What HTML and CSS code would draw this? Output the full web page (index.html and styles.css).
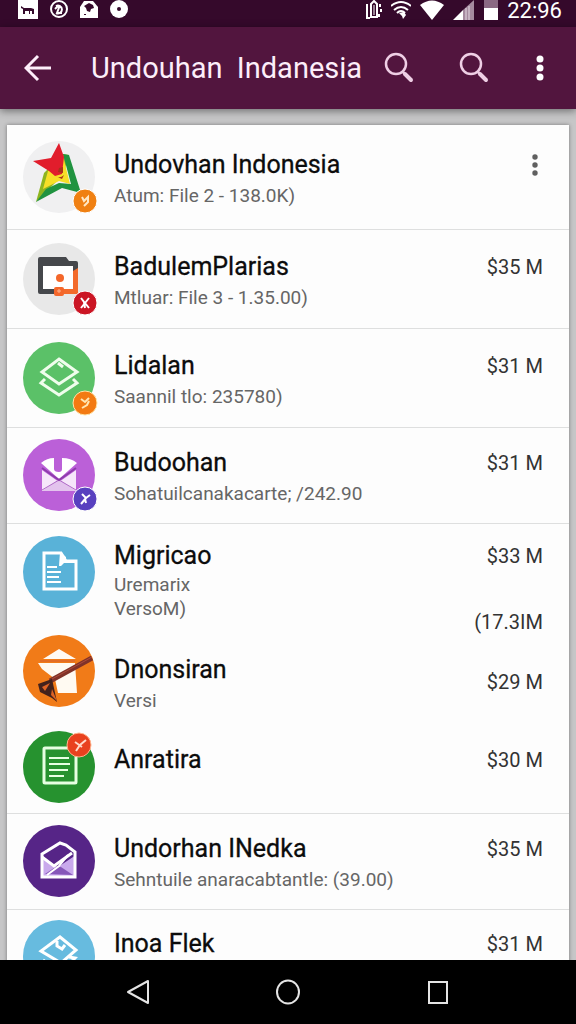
FILE: index.html
```html
<!DOCTYPE html>
<html lang="id">
<head>
  <meta charset="UTF-8">
  <meta name="viewport" content="width=device-width, initial-scale=1.0">
  <title>Undouhan Indanesia</title>
  <link rel="stylesheet" href="styles.css">
</head>
<body>
  <!-- Status bar -->
  <div class="status-bar">
    <div class="status-left">
      <svg width="20" height="20" viewBox="0 0 20 20"><path fill="#fff" d="M0 0h20v19H0z"/><path fill="#35092b" d="M3 6l3 2h7l3 1v5h-2v-3h-2v3h-1v-3H7v3H5V9L3 8z"/></svg>
      <svg width="18" height="20" viewBox="0 0 18 20"><g fill="none" stroke="#fff"><circle cx="9" cy="9" r="8" stroke-width="2"/><path stroke-width="2" d="M6 6a4 4 0 1 1 0 7M10 5l-3 8h5M5 9l3-3"/></g></svg>
      <svg width="18" height="20" viewBox="0 0 18 20"><path fill="#fff" d="M0 18V7l4-6h9l5 6v11z"/><path fill="#35092b" d="M4 6l5-3 4 2 1 3-3 1-1 3-3-1-1-3zM4 14h2v1H4z"/></svg>
      <svg width="18" height="20" viewBox="0 0 18 20"><circle cx="9" cy="9" r="9" fill="#fff"/><circle cx="9" cy="9" r="2" fill="#35092b"/></svg>
    </div>
    <div class="status-right">
      <svg width="16" height="20" viewBox="0 0 16 20"><g fill="none" stroke="#fff"><path stroke-width="2" d="M5 17V4l3-3 3 3v13zM1 4v14h3"/><path stroke-width="2" d="M14 4v3M15 9v3M13 14v3"/><path d="M8 5v10"/></g></svg>
      <svg width="20" height="20" viewBox="0 0 20 20"><g fill="none" stroke="#fff" stroke-width="2"><path d="M0 6q10-8 20 0M3 10q7-6 14 0M6 13q4-4 8 0"/></g><path fill="#fff" d="M8 13l5-1 2 3-3 4-1-3z"/></svg>
      <svg width="24" height="20" viewBox="0 0 24 20"><path fill="#fff" d="M0 5q12-9 24 0L12 20z"/></svg>
      <svg width="22" height="20" viewBox="0 0 22 20"><path fill="#a58a9f" d="M21 0v20H10V10z"/><path fill="#fff" d="M10 10v10H0z"/><path stroke="#e7dbe5" d="M13 8v12M16 6v14"/></svg>
      <svg width="14" height="20" viewBox="0 0 14 20"><path fill="#8b6983" d="M0 0h14v8H0z"/><path fill="#fff" d="M0 8h14v12H0z"/></svg>
      <span class="clock">22:96</span>
    </div>
  </div>

  <!-- App bar -->
  <header class="app-bar">
    <button class="back-button" aria-label="Kembali">
      <svg width="28" height="28" viewBox="0 0 28 28"><path fill="none" stroke="#fdeefa" stroke-width="3" d="M27 14H2M14 2L2 14l12 12"/></svg>
    </button>
    <h1 class="app-title">Undouhan&nbsp; Indanesia</h1>
    <button class="search-button" aria-label="Cari">
      <svg width="30" height="32" viewBox="0 0 30 32"><g fill="none" stroke="#efcfe5"><circle cx="12" cy="12" r="10" stroke-width="2.5"/><path stroke-width="2.5" d="M18 19l3 3"/><path stroke-width="4" stroke-linecap="round" d="M21 22l6 6"/></g></svg>
    </button>
    <button class="search-button" aria-label="Cari file">
      <svg width="30" height="32" viewBox="0 0 30 32"><g fill="none" stroke="#efcfe5"><circle cx="12" cy="12" r="10" stroke-width="2.5"/><path stroke-width="2.5" d="M18 19l3 3"/><path stroke-width="4" stroke-linecap="round" d="M21 22l6 6"/></g></svg>
    </button>
    <button class="menu-button" aria-label="Menu">
      <svg width="8" height="28" viewBox="0 0 8 28"><g fill="#fff"><circle cx="4" cy="5" r="3.5"/><circle cx="4" cy="14" r="3.5"/><circle cx="4" cy="23" r="3.5"/></g></svg>
    </button>
  </header>

  <!-- File list -->
  <main class="content">
    <ul class="file-list">
      <li class="row row-first">
        <svg class="avatar" viewBox="0 0 72 72">
          <circle cx="36" cy="36" r="36" fill="#f0f0f1"/>
          <path fill="#8eb51f" d="M13 61l8-29 19-19 6 1-6 20z"/>
          <path fill="#209340" d="M40 13l6 1 12 38-19-5-26 14 10-13 13-6 12 1z"/>
          <path fill="#f7df27" d="M25 30l15-15 7 28-11-3-16 8z"/>
          <path fill="#e11d2c" d="M36 2l5 14-2 17-7 2-6-5-16-10 18-3z"/>
          <path fill="#a8321a" d="M36 27l4-1v6l-5-1zM32 35q5 3 9-1l-2 4z"/>
          <circle cx="62" cy="60" r="12" fill="#f08012" stroke="#fff"/>
          <path fill="none" stroke="#ffe7c4" stroke-width="2" d="M59 56l2 4 4-4v5l-4 4"/>
        </svg>
        <div class="info">
          <h2 class="name">Undovhan Indonesia</h2>
          <p class="detail">Atum: File 2 - 138.0K)</p>
        </div>
        <button class="row-menu" aria-label="Opsi">
          <svg width="8" height="24" viewBox="0 0 8 24"><g fill="#606060"><circle cx="4" cy="4" r="2.7"/><circle cx="4" cy="12" r="2.7"/><circle cx="4" cy="20" r="2.7"/></g></svg>
        </button>
      </li>

      <li class="row">
        <svg class="avatar" viewBox="0 0 72 72">
          <circle cx="36" cy="36" r="36" fill="#e8e8e8"/>
          <path fill="#45474b" d="M15 16q0-2 2-2h26l3 4h7q2 0 2 2v30q0 1-1 1H17q-2 0-2-2z"/>
          <path fill="#fff" d="M20 23h30v23H20z"/>
          <path fill="#f36b2c" d="M50 28l5-3v26H39v-5h11z"/>
          <circle cx="37" cy="35" r="4" fill="#f4672b"/>
          <rect x="31" y="44" width="10" height="9" rx="2" fill="#f4672b"/>
          <path stroke="#ffb38e" d="M34 48h4M36 46v4"/>
          <circle cx="62" cy="60" r="12" fill="#cb1524" stroke="#fff"/>
          <path fill="none" stroke="#fff" stroke-width="2" d="M58 55l3 4 1 6M66 55l-4 5-4 5M62 60l4 5"/>
        </svg>
        <div class="info">
          <h2 class="name">BadulemPlarias</h2>
          <p class="detail">Mtluar: File 3 - 1.35.00)</p>
        </div>
        <span class="size">$35 M</span>
      </li>

      <li class="row">
        <svg class="avatar" viewBox="0 0 72 72">
          <circle cx="36" cy="36" r="36" fill="#5bc168"/>
          <g fill="none" stroke="#effdec" stroke-width="3">
            <path d="M36 17l18 13-18 12-17-12z"/>
            <path d="M22 37l-4 4 18 12 18-12-4-4"/>
            <path d="M35 21l5 4"/>
          </g>
          <circle cx="62" cy="61" r="12" fill="#f37a12" stroke="#ffe4a8"/>
          <path fill="none" stroke="#ffe7b4" stroke-width="2" d="M58 57l4 3 4-4M66 59l-2 4-5 3"/>
        </svg>
        <div class="info">
          <h2 class="name">Lidalan</h2>
          <p class="detail">Saannil tlo: 235780)</p>
        </div>
        <span class="size">$31 M</span>
      </li>

      <li class="row row-compact">
        <svg class="avatar" viewBox="0 0 72 72">
          <circle cx="36" cy="36" r="36" fill="#bb60d8"/>
          <path fill="#f6e6fa" d="M19 31l17 12 17-12v21H19z"/>
          <path fill="#e3c3ed" d="M19 52l17-12 17 12z"/>
          <path fill="none" stroke="#b06ac7" d="M19 51l17-10 17 10"/>
          <path fill="#fff" d="M18 24q6-5 13-5v11q0 3 5 3 3 0 3-3V19q9 0 15 5L36 40z"/>
          <path fill="none" stroke="#8e3cac" stroke-width="2" d="M19 29l17 12 17-12"/>
          <circle cx="62" cy="60" r="12" fill="#5840bf" stroke="#fff"/>
          <path fill="none" stroke="#fff" stroke-width="2" d="M59 55l4 4-5 6M63 59l4-3M62 60l1 4"/>
        </svg>
        <div class="info">
          <h2 class="name">Budoohan</h2>
          <p class="detail">Sohatuilcanakacarte; /242.90</p>
        </div>
        <span class="size">$31 M</span>
      </li>

      <li class="row row-multi">
        <svg class="avatar" viewBox="0 0 72 72">
          <circle cx="36" cy="36" r="36" fill="#59b2d8"/>
          <path fill="none" stroke="#fff" stroke-width="3" d="M21 17h17l5 8h10v28H21z"/>
          <path fill="#fff" d="M37 16l6 5v3h11v3H41l-3 3h-2z"/>
          <path stroke="#fff" stroke-width="2" d="M24 31h10M24 36h14M24 41h12M24 46h14"/>
        </svg>
        <div class="info">
          <h2 class="name">Migricao</h2>
          <p class="detail">Uremarix<br>VersoM)</p>
        </div>
        <div class="sizes">
          <span class="size">$33 M</span>
          <span class="size">(17.3IM</span>
        </div>
      </li>

      <li class="row row-short">
        <svg class="avatar" viewBox="0 0 72 72">
          <circle cx="36" cy="36" r="36" fill="#f17b18"/>
          <path fill="#fffaf2" d="M36 14l17 10H20zM15 28h37l2 30H35l-3-14-13-10z"/>
          <path stroke="#e26d26" stroke-width="2" d="M17 26h35"/>
          <path stroke="#803229" stroke-width="5" d="M69 23L27 46"/>
          <path stroke="#ad4a3b" d="M69 22L29 44"/>
          <path fill="#43221c" d="M15 49l14-5 5 23-5-4-12-6z"/>
          <path fill="#df6324" d="M19 52l8-4-5 8zM29 54l5 12-6-6z"/>
        </svg>
        <div class="info">
          <h2 class="name">Dnonsiran</h2>
          <p class="detail">Versi</p>
        </div>
        <span class="size">$29 M</span>
      </li>

      <li class="row row-single">
        <svg class="avatar" viewBox="0 0 72 72">
          <circle cx="36" cy="36" r="36" fill="#26922f"/>
          <rect x="21" y="17" width="32" height="35" rx="1" fill="none" stroke="#e6ffe2" stroke-width="3"/>
          <path stroke="#e6ffe2" stroke-width="2" d="M26 27h20M26 33h21M26 39h19M26 45h15"/>
          <circle cx="56" cy="14" r="12" fill="#e9411e" stroke="#ffb38d"/>
          <path fill="none" stroke="#ffd9c8" stroke-width="2" d="M52 11l7 5M63 9l-6 5-4 6"/>
        </svg>
        <div class="info">
          <h2 class="name">Anratira</h2>
        </div>
        <span class="size">$30 M</span>
      </li>

      <li class="row row-compact">
        <svg class="avatar" viewBox="0 0 72 72">
          <circle cx="36" cy="36" r="36" fill="#562587"/>
          <path fill="#c9a9ec" d="M18 33l17 9 18-12v22H18z"/>
          <path fill="#8657b9" d="M22 49l12-8 4 1 12 8z"/>
          <path fill="none" stroke="#fff" stroke-width="3" d="M19 29l18-11 6 2 9 7v25H19z"/>
          <path fill="none" stroke="#fff" stroke-width="3" d="M19 32l12 9 18-13"/>
          <path fill="none" stroke="#fff" stroke-width="2" d="M24 50l12-9 9-11"/>
        </svg>
        <div class="info">
          <h2 class="name">Undorhan INedka</h2>
          <p class="detail">Sehntuile anaracabtantle: (39.00)</p>
        </div>
        <span class="size">$35 M</span>
      </li>

      <li class="row row-last">
        <svg class="avatar" viewBox="0 0 72 72">
          <circle cx="36" cy="36" r="36" fill="#67bbdf"/>
          <g fill="none" stroke="#fff" stroke-width="3">
            <path d="M37 17l16 13-15 13-20-12z"/>
            <path d="M34 21v5l5 3 3-4M46 37l6 1-14 15-18-13"/>
          </g>
        </svg>
        <div class="info">
          <h2 class="name">Inoa Flek</h2>
        </div>
        <span class="size">$31 M</span>
      </li>
    </ul>
  </main>

  <!-- Navigation bar -->
  <nav class="nav-bar">
    <button class="nav-button" aria-label="Kembali">
      <svg width="24" height="26" viewBox="0 0 24 26"><path fill="none" stroke="#e4e4e4" stroke-width="2" stroke-linejoin="round" d="M22 2v22L2 13z"/></svg>
    </button>
    <button class="nav-button" aria-label="Beranda">
      <svg width="24" height="26" viewBox="0 0 24 26"><ellipse cx="12" cy="13" rx="11" ry="11.5" fill="none" stroke="#e4e4e4" stroke-width="2"/></svg>
    </button>
    <button class="nav-button" aria-label="Terbaru">
      <svg width="24" height="26" viewBox="0 0 24 26"><path fill="none" stroke="#e4e4e4" stroke-width="2" d="M3 3h18v21H3z"/></svg>
    </button>
  </nav>
</body>
</html>
```
FILE: styles.css
```css
/* Global Styles */
* {
  box-sizing: border-box;
}

body {
  margin: 0;
  height: 100vh;
  display: flex;
  flex-direction: column;
  overflow: hidden;
  background: #c6c6c7;
  font-family: Roboto, "Liberation Sans", sans-serif;
  color: #0c0c0c;
}

button {
  display: flex;
  align-items: center;
  justify-content: center;
  flex-shrink: 0;
  padding: 0;
  border: none;
  background: none;
  cursor: pointer;
}

svg {
  display: block;
  flex-shrink: 0;
}

/* Status bar */
.status-bar {
  flex-shrink: 0;
  display: flex;
  justify-content: space-between;
  height: 27px;
  padding: 0 14px 0 18px;
  background: #35092b;
}

.status-left {
  display: flex;
  gap: 12px;
}

.status-right {
  display: flex;
  gap: 9px;
}

.clock {
  font-size: 22px;
  line-height: 21px;
  color: #fff;
}

/* App bar */
.app-bar {
  position: relative;
  flex-shrink: 0;
  display: flex;
  align-items: center;
  height: 82px;
  padding: 0 7px 0 14px;
  background: #52153e;
  box-shadow: 0 2px 8px rgba(0, 0, 0, 0.45);
}

.back-button {
  width: 48px;
  height: 48px;
}

.app-title {
  flex: 1;
  min-width: 0;
  margin: 0 0 0 29px;
  font-size: 29px;
  line-height: 36px;
  font-weight: 400;
  white-space: nowrap;
  color: #fdeefa;
}

.search-button {
  width: 75px;
  height: 56px;
}

.menu-button {
  width: 58px;
  height: 56px;
}

/* File list */
.content {
  flex: 1;
  min-height: 0;
  padding: 16px 7px 0;
  overflow: hidden;
}

.file-list {
  margin: 0;
  padding: 0;
  list-style: none;
  background: #fdfdfd;
  box-shadow: 0 0 4px rgba(0, 0, 0, 0.4);
}

.row {
  display: flex;
  align-items: flex-start;
  min-height: 99px;
  padding: 21px 26px 0 16px;
  border-bottom: 1px solid #dedfdf;
}

.avatar {
  width: 72px;
  height: 72px;
  margin: -8px 0;
  overflow: visible;
}

.info {
  flex: 1;
  min-width: 0;
  padding-left: 19px;
}

.name {
  margin: 0;
  font-size: 25px;
  line-height: 32px;
  font-weight: 400;
  -webkit-text-stroke: 0.3px #0c0c0c;
}

.detail {
  margin: 3px 0 0;
  font-size: 19px;
  line-height: 24px;
  color: #666;
}

.size {
  font-size: 20px;
  line-height: 32px;
  color: #333;
}

.sizes {
  display: flex;
  flex-direction: column;
  align-items: flex-end;
  gap: 34px;
  margin-bottom: -16px;
}

.row-menu {
  width: 32px;
  height: 32px;
  margin-right: -8px;
}

/* Row variants */
.row-first {
  min-height: 105px;
  padding-top: 24px;
}

.row-compact {
  min-height: 96px;
  padding-top: 19px;
}

.row-multi {
  min-height: 98px;
  padding-top: 16px;
  border-bottom: none;
}

.row-multi .avatar {
  margin-top: -4px;
}

.row-multi .detail {
  margin-top: 1px;
}

.row-short {
  min-height: 98px;
  padding-top: 32px;
  border-bottom: none;
}

.row-short .avatar {
  margin-top: -19px;
}

.row-short .size {
  margin-top: 12px;
}

.row-single {
  min-height: 94px;
  padding-top: 24px;
}

.row-single .avatar {
  margin-top: -13px;
}

.row-last {
  padding-top: 18px;
  border-bottom: none;
}

/* Navigation bar */
.nav-bar {
  flex-shrink: 0;
  display: flex;
  align-items: center;
  justify-content: center;
  gap: 102px;
  height: 64px;
  background: #000;
}

.nav-button {
  width: 48px;
  height: 48px;
}
```
